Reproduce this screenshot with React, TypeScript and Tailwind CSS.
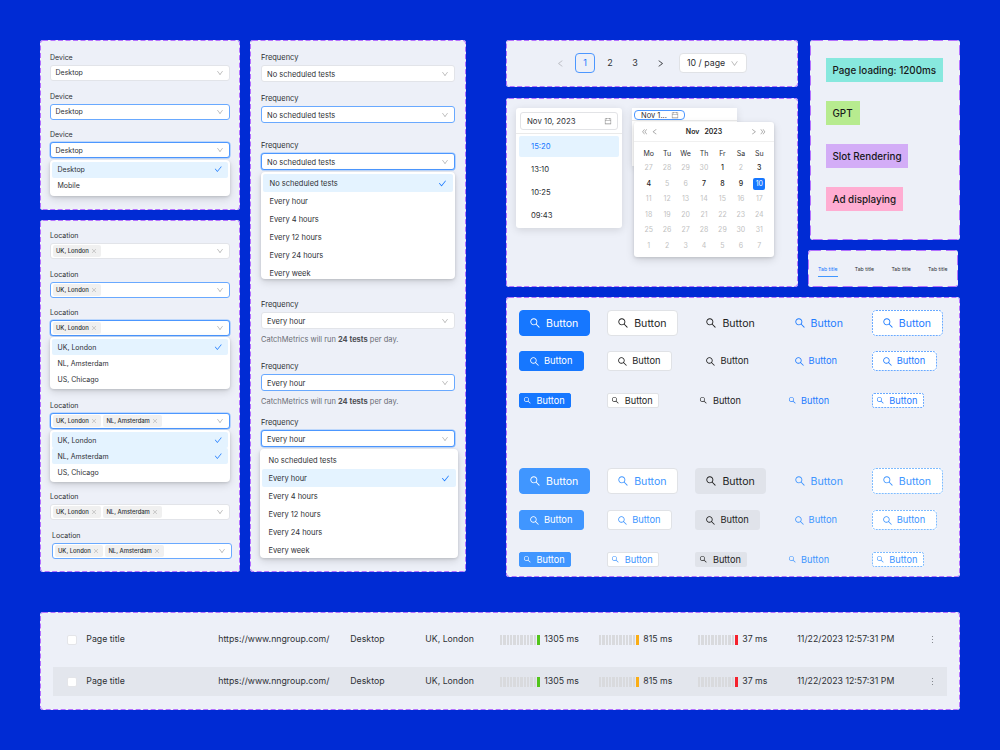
import type { ReactNode } from "react";
import clsx from "clsx";
import {
  AiOutlineCalendar,
  AiOutlineCheck,
  AiOutlineClose,
  AiOutlineDoubleLeft,
  AiOutlineDoubleRight,
  AiOutlineDown,
  AiOutlineLeft,
  AiOutlineMore,
  AiOutlineRight,
  AiOutlineSearch,
} from "react-icons/ai";

const FREQUENCIES = [
  "No scheduled tests",
  "Every hour",
  "Every 4 hours",
  "Every 12 hours",
  "Every 24 hours",
  "Every week",
];
const LOCATIONS = ["UK, London", "NL, Amsterdam", "US, Chicago"];
const WEEKDAYS = ["Mo", "Tu", "We", "Th", "Fr", "Sa", "Su"];
const DAYS = [
  27, 28, 29, 30, 1, 2, 3, 4, 5, 6, 7, 8, 9, 10, 11, 12, 13, 14, 15, 16, 17,
  18, 19, 20, 21, 22, 23, 24, 25, 26, 27, 28, 29, 30, 31, 1, 2, 3, 4, 5, 6, 7,
];
// indexes in DAYS that can be picked
const ENABLED_DAYS = [4, 6, 7, 10, 11, 12];
const SELECTED_DAY = 13;

function Panel({
  className,
  dash = "5 2.5",
  children,
}: {
  className: string;
  dash?: string;
  children: ReactNode;
}) {
  return (
    <section className={clsx("relative shrink-0 rounded-[3px] bg-[#edf0f8]", className)}>
      <svg className="pointer-events-none absolute inset-0 h-full w-full" fill="none">
        <rect
          x="0.5"
          y="0.5"
          rx="2.5"
          className="h-[calc(100%-1px)] w-[calc(100%-1px)]"
          stroke="#b370ff"
          strokeDasharray={dash}
        />
      </svg>
      {children}
    </section>
  );
}

type FieldProps = {
  label: string;
  value?: string;
  tags?: string[];
  state?: "default" | "hover" | "open";
  size?: "sm" | "md";
  className?: string;
};

function Field({ label, value, tags, state = "default", size = "sm", className }: FieldProps) {
  return (
    <div
      className={clsx(
        className,
        size === "sm" ? "w-[180px] text-[7px]" : "w-[194px] text-[7.5px]",
      )}
    >
      <div className="h-[15px] leading-4">{label}</div>
      <div
        className={clsx(
          "flex items-center justify-between rounded-[3px] border bg-white pr-[5px]",
          size === "sm" ? "h-4" : "h-[17px]",
          tags ? "pl-[2px]" : size === "sm" ? "pl-[4.5px]" : "pl-[5px]",
          state === "default" && "border-[#e2e4e9]",
          state === "hover" && "border-[#69a9ff]",
          state === "open" && "border-[#4c97ff] shadow-[0_0_0_0.6px_#8fc0ff]",
        )}
      >
        {tags ? (
          <div className="flex gap-[2.5px]">
            {tags.map((t) => (
              <span
                key={t}
                className="flex h-3 items-center gap-[2px] rounded-[2px] bg-[#f0f0f0] pr-[4px] pl-[3px] text-[5.9px] font-medium"
              >
                {t}
                <AiOutlineClose className="size-[6px] text-[#a8a8a8]" />
              </span>
            ))}
          </div>
        ) : (
          <span className="pt-px">{value}</span>
        )}
        <AiOutlineDown className="size-2 text-[#b3b3b3]" />
      </div>
    </div>
  );
}

function Menu({
  options,
  selected,
  size = "sm",
  className,
}: {
  options: string[];
  selected: string[];
  size?: "sm" | "md";
  className?: string;
}) {
  return (
    <div
      className={clsx(
        "overflow-hidden rounded-[4px] bg-white p-[2px] shadow-[0_3px_8px_rgba(0,0,0,0.13),0_1px_3px_rgba(0,0,0,0.14)]",
        size === "sm" ? "text-[7px]" : "text-[7.5px]",
        className,
      )}
    >
      {options.map((o) => (
        <div
          key={o}
          className={clsx(
            "flex items-center justify-between pr-[6px]",
            size === "sm" ? "h-4 pl-[5.5px]" : "h-[18px] pl-[6.5px]",
            selected.includes(o) && "rounded-[2px] bg-[#e4f3ff]",
          )}
        >
          <span className="pt-[1.5px]">{o}</span>
          {selected.includes(o) && (
            <AiOutlineCheck className={clsx("text-[#1677ff]", size === "sm" ? "size-[8.5px]" : "size-[9px]")} />
          )}
        </div>
      ))}
    </div>
  );
}

function TestsHint() {
  return (
    <p className="mt-[4px] h-3 text-[7.5px] leading-[14px] text-[#6b6e75]">
      CatchMetrics will run <b className="font-bold text-[#4d4f54]">24 tests</b> per day.
    </p>
  );
}

const BUTTON_SIZES = {
  lg: "h-[26px] w-[71px] gap-[5px] rounded-[4px] pl-[9px] text-[10.6px]",
  md: "h-5 w-[65px] gap-[4px] rounded-[3px] pl-[9px] text-[9.3px]",
  sm: "h-[15px] w-[52px] gap-[5px] rounded-[2px] pl-[3px] text-[9.2px]",
};
const ICON_SIZES = { lg: "size-3", md: "size-[11px]", sm: "size-[8.5px]" };

const VARIANTS = ["primary", "default", "text", "link", "dashed"] as const;
type Variant = (typeof VARIANTS)[number];

const VARIANT_CLASSES: Record<Variant, string> = {
  primary: "border-[#1677ff] bg-[#1677ff] text-white",
  default: "border-[#e0e2e6] bg-white text-[#1f1f1f]",
  text: "border-transparent text-[#1f1f1f]",
  link: "border-transparent text-[#1f7cff]",
  dashed: "border-transparent bg-white text-[#1f7cff]",
};
const HOVER_CLASSES: Record<Variant, string> = {
  primary: "border-[#4096ff] bg-[#4096ff] text-white",
  default: "border-[#e0e2e6] bg-white text-[#4096ff]",
  text: "border-transparent bg-[#e0e3ea] text-[#1f1f1f]",
  link: "border-transparent text-[#4096ff]",
  dashed: "border-transparent bg-white text-[#4096ff]",
};

function ButtonRow({
  size,
  hover,
  className,
}: {
  size: "lg" | "md" | "sm";
  hover?: boolean;
  className?: string;
}) {
  return (
    <div className={clsx("grid grid-cols-[repeat(5,88.2px)]", className)}>
      {VARIANTS.map((v) => (
        <button
          key={v}
          className={clsx(
            "relative flex items-center border",
            BUTTON_SIZES[size],
            hover ? HOVER_CLASSES[v] : VARIANT_CLASSES[v],
          )}
        >
          {v === "dashed" && (
            <svg className="absolute -top-px -left-px h-[calc(100%+2px)] w-[calc(100%+2px)]" fill="none">
              <rect
                x="0.5"
                y="0.5"
                rx={size === "sm" ? 1.5 : 3.5}
                className="h-[calc(100%-1px)] w-[calc(100%-1px)]"
                stroke={hover ? "#7dbbff" : "#69a9ff"}
                strokeDasharray="2 1"
              />
            </svg>
          )}
          <AiOutlineSearch className={ICON_SIZES[size]} />
          <span className={size === "lg" ? "pt-px" : ""}>Button</span>
        </button>
      ))}
    </div>
  );
}

function Metric({ value, color }: { value: string; color: string }) {
  return (
    <div className="flex items-center">
      <div className="mr-[4.5px] flex w-[40px] justify-between">
        {Array.from({ length: 11 }, (_, i) => (
          <i key={i} className="h-[10px] w-[2.4px] bg-[#d9dadd]" />
        ))}
        <i className={clsx("h-[10px] w-[2.6px]", color)} />
      </div>
      <span className="pt-px">{value}</span>
    </div>
  );
}

function TableRow({ className }: { className?: string }) {
  return (
    <div
      className={clsx(
        "grid h-[29px] w-[894px] grid-cols-[33.3px_132px_132px_75px_74.5px_99px_99px_99px_1fr] items-center text-[8.75px] whitespace-nowrap",
        className,
      )}
    >
      <i className="ml-[14px] size-[10px] rounded-[2px] border border-[#e4e5e9] bg-white" />
      <span className="pt-px">Page title</span>
      <span className="pt-px">https://www.nngroup.com/</span>
      <span className="pt-px">Desktop</span>
      <span className="pt-px">UK, London</span>
      <Metric value="1305 ms" color="bg-[#52c41a]" />
      <Metric value="815 ms" color="bg-[#faad14]" />
      <Metric value="37 ms" color="bg-[#f5222d]" />
      <div className="flex items-center justify-between pr-[9px] pl-[0.5px]">
        <span className="pt-px">11/22/2023 12:57:31 PM</span>
        <AiOutlineMore className="size-[11px] text-[#777a80]" />
      </div>
    </div>
  );
}

function TimePicker() {
  return (
    <div className="h-[120px] w-[106px] rounded-[3px] bg-white shadow-[0_2px_8px_rgba(0,0,0,0.12)]">
      <div className="border-b border-[#eaeaea] px-1 pt-1 pb-[3px]">
        <div className="flex h-[18px] items-center justify-between rounded-[3px] border border-[#e2e3e6] pr-[5px] pl-[6px] text-[7.8px]">
          <span className="pt-px">Nov 10, 2023</span>
          <AiOutlineCalendar className="size-[8px] text-[#8c8c8c]" />
        </div>
      </div>
      <div className="mt-[2px] flex flex-col gap-[2px] px-[3px] text-[7.7px]">
        {["15:20", "13:10", "10:25", "09:43"].map((t, i) => (
          <div
            key={t}
            className={clsx(
              "flex h-[21px] items-center rounded-[2px] pl-3",
              i === 0 && "bg-[#e4f3ff] text-[#1677ff]",
            )}
          >
            {t}
          </div>
        ))}
      </div>
    </div>
  );
}

function DatePicker() {
  return (
    <div className="relative h-[58px] w-[105px] bg-white shadow-[0_2px_8px_rgba(0,0,0,0.1)]">
      <div className="h-[13px] border-b border-[#eaeaea] pt-[2px] pl-[2px]">
        <div className="flex h-[10px] w-[51px] items-center justify-between rounded-[4px] border border-[#4c97ff] pr-[5px] pl-[6px] text-[7.5px] leading-none">
          <span className="pt-px">Nov 1...</span>
          <AiOutlineCalendar className="size-[8px] text-[#8c8c8c]" />
        </div>
      </div>
      <div className="absolute top-[14px] left-[2px] h-[135px] w-[140px] rounded-[3px] bg-white shadow-[0_3px_8px_rgba(0,0,0,0.13),0_1px_3px_rgba(0,0,0,0.12)]">
        <div className="flex h-5 items-center justify-between border-b border-[#f0f0f0] px-[7px] text-[#999]">
          <div className="flex gap-[2px]">
            <AiOutlineDoubleLeft className="size-[7.5px]" />
            <AiOutlineLeft className="size-[7.5px]" />
          </div>
          <span className="pt-px text-[7px] font-semibold text-[#1f1f1f]">
            Nov<span className="ml-[5px]">2023</span>
          </span>
          <div className="flex gap-[2px]">
            <AiOutlineRight className="size-[7.5px]" />
            <AiOutlineDoubleRight className="size-[7.5px]" />
          </div>
        </div>
        <div className="mx-[5.5px] mt-[5px] grid grid-cols-7 text-center text-[7px]">
          {WEEKDAYS.map((d) => (
            <span key={d} className="h-[13.5px] leading-[14px]">
              {d}
            </span>
          ))}
          {DAYS.map((d, i) => (
            <span key={i} className="flex h-[15.5px] items-center justify-center">
              <span
                className={clsx(
                  "size-3 leading-3",
                  i === SELECTED_DAY
                    ? "rounded-[2px] bg-[#1677ff] text-white"
                    : ENABLED_DAYS.includes(i)
                      ? "font-medium text-[#1f1f1f]"
                      : "text-[#bfbfbf]",
                )}
              >
                {d}
              </span>
            </span>
          ))}
        </div>
      </div>
    </div>
  );
}

export default function App() {
  return (
    <main className="h-[750px] w-[1000px] overflow-hidden bg-[#002bd4] p-10 font-['Inter',sans-serif] text-[#2e3035]">
      <div className="flex h-[537px]">
        <div className="flex w-[200px] flex-col gap-[10px]">
          <Panel className="h-[170px] px-[10px] pt-[9.7px]">
            <Field label="Device" value="Desktop" />
            <Field label="Device" value="Desktop" state="hover" className="mt-[8px]" />
            <Field label="Device" value="Desktop" state="open" className="mt-[7.6px]" />
            <Menu options={["Desktop", "Mobile"]} selected={["Desktop"]} className="mt-[1.4px]" />
          </Panel>
          <Panel className="h-[352px] px-[10px] pt-2">
            <Field label="Location" tags={["UK, London"]} />
            <Field label="Location" tags={["UK, London"]} state="hover" className="mt-2" />
            <Field label="Location" tags={["UK, London"]} state="open" className="mt-[7px]" />
            <Menu options={LOCATIONS} selected={["UK, London"]} className="mt-px" />
            <Field
              label="Location"
              tags={["UK, London", "NL, Amsterdam"]}
              state="open"
              className="mt-[9px]"
            />
            <Menu options={LOCATIONS} selected={["UK, London", "NL, Amsterdam"]} className="mt-px" />
            <Field label="Location" tags={["UK, London", "NL, Amsterdam"]} className="mt-[7px]" />
            <Field
              label="Location"
              tags={["UK, London", "NL, Amsterdam"]}
              state="hover"
              className="mt-2 ml-[2px]"
            />
          </Panel>
        </div>

        <Panel className="ml-[10px] h-[532px] w-[216px] px-[11px] pt-[10.3px]">
          <Field size="md" label="Frequency" value="No scheduled tests" />
          <Field size="md" label="Frequency" value="No scheduled tests" state="hover" className="mt-[9px]" />
          <Field size="md" label="Frequency" value="No scheduled tests" state="open" className="mt-[15px]" />
          <Menu
            size="md"
            options={FREQUENCIES}
            selected={["No scheduled tests"]}
            className="mt-[2px] h-[107px] w-[194px]"
          />
          <Field size="md" label="Frequency" value="Every hour" className="mt-[18px]" />
          <TestsHint />
          <Field size="md" label="Frequency" value="Every hour" state="hover" className="mt-[14px]" />
          <TestsHint />
          <Field size="md" label="Frequency" value="Every hour" state="open" className="mt-[8px]" />
          <Menu
            size="md"
            options={FREQUENCIES}
            selected={["Every hour"]}
            className="mt-[2px] -ml-px h-[109px] w-[198px]"
          />
        </Panel>

        <div className="ml-10 flex w-[454px] flex-col gap-[10px]">
          <div className="flex justify-between">
            <div className="flex flex-col gap-[11px]">
              <Panel className="flex h-[47px] w-[292px] pt-[13px] pl-11 text-[9px]">
                <div className="flex h-5 items-center gap-[5px]">
                  <span className="flex w-5 justify-center">
                    <AiOutlineLeft className="size-[9px] text-[#b8bac0]" />
                  </span>
                  <span className="flex size-5 items-center justify-center rounded-[4px] border border-[#4c97ff] text-[#1677ff]">
                    1
                  </span>
                  <span className="w-5 text-center">2</span>
                  <span className="w-5 text-center">3</span>
                  <span className="flex w-5 justify-center">
                    <AiOutlineRight className="size-[9px]" />
                  </span>
                  <span className="ml-[4px] flex h-5 w-[68px] items-center justify-between rounded-[4px] border border-[#e0e2e6] bg-white px-[7px] text-[8.8px]">
                    10 / page
                    <AiOutlineDown className="size-[9px] text-[#b3b3b3]" />
                  </span>
                </div>
              </Panel>
              <Panel className="flex h-[189px] w-[292px] items-start gap-[10px] pt-[10px] pl-[10px]">
                <TimePicker />
                <DatePicker />
              </Panel>
            </div>

            <div className="flex flex-col gap-[10px]">
              <Panel
                dash="10 5"
                className="ml-[2px] flex h-[200px] w-[150px] flex-col items-start gap-[19px] pt-[18px] pl-4 text-[9.85px] font-medium text-[#17181a]"
              >
                <span className="flex h-6 w-[117px] items-center bg-[#87e8de] pl-[6.5px]">
                  Page loading: 1200ms
                </span>
                <span className="flex h-6 w-[34px] items-center bg-[#b7eb8f] pl-[6.5px]">GPT</span>
                <span className="flex h-6 w-[82px] items-center bg-[#d3adf7] pl-[6.5px]">
                  Slot Rendering
                </span>
                <span className="flex h-6 w-[77px] items-center bg-[#ffadd2] pl-[6.5px]">
                  Ad displaying
                </span>
              </Panel>
              <Panel
                dash="10 5"
                className="flex h-[37px] w-[150px] items-start gap-[16.7px] pt-[13px] pl-[10px] text-[5.2px]"
              >
                {[0, 1, 2, 3].map((i) => (
                  <span
                    key={i}
                    className={clsx(
                      "h-[14px] w-5 leading-[12px] whitespace-nowrap",
                      i === 0 && "border-b border-[#4096ff] text-[#1677ff]",
                    )}
                  >
                    Tab title
                  </span>
                ))}
              </Panel>
            </div>
          </div>

          <Panel className="h-[280px] pt-[13px] pl-[13px]">
            <ButtonRow size="lg" />
            <ButtonRow size="md" className="mt-[15px]" />
            <ButtonRow size="sm" className="mt-[22px]" />
            <ButtonRow size="lg" hover className="mt-[60px]" />
            <ButtonRow size="md" hover className="mt-4" />
            <ButtonRow size="sm" hover className="mt-[22px]" />
          </Panel>
        </div>
      </div>

      <Panel className="mt-[35px] h-[98px] w-[920px] pt-[13px] pl-[13px]">
        <TableRow />
        <TableRow className="mt-[13px] bg-[#e3e6ed]" />
      </Panel>
    </main>
  );
}
